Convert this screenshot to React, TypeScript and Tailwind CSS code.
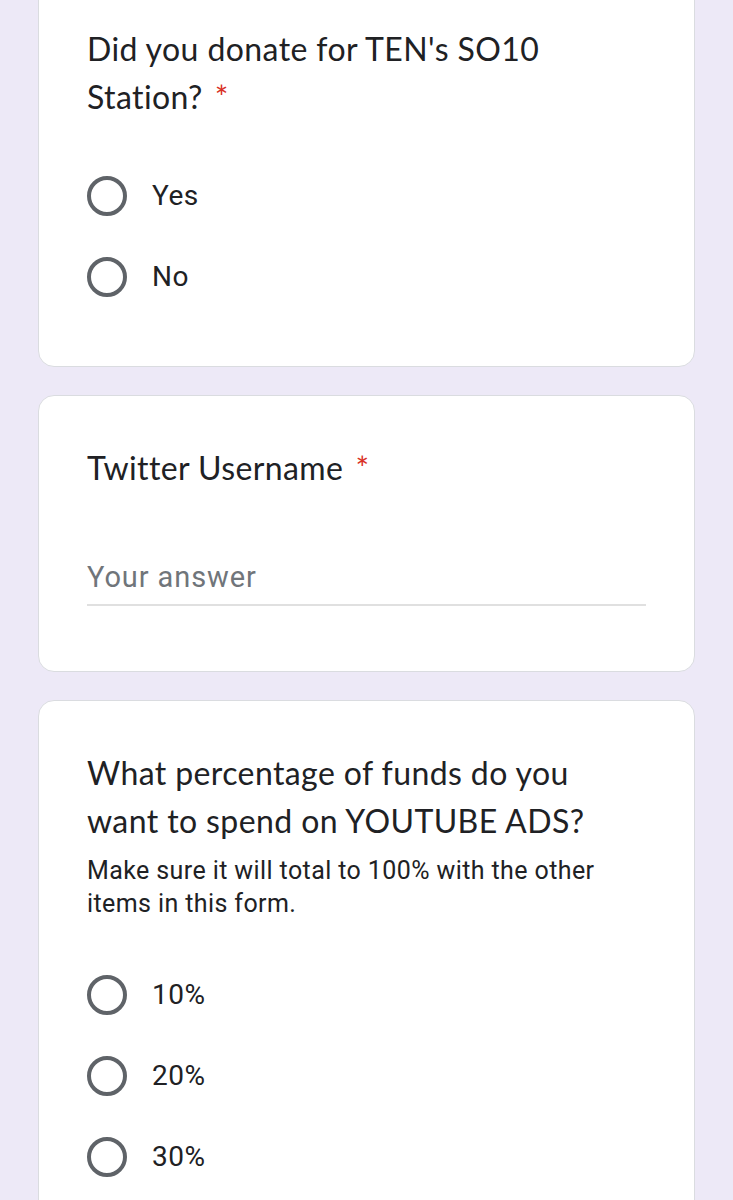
import React from "react";

const titleFont = { fontFamily: "Lato, 'Open Sans', sans-serif" };

function Radio({ label }: { label: string }) {
  return (
    <div className="flex items-center h-[81px]">
      <div className="w-10 h-10 rounded-full border-[4px] border-[#5f6368] shrink-0" />
      <span className="ml-[25px] text-[28px] tracking-[0.5px] text-[#202124] font-['Roboto',sans-serif]">
        {label}
      </span>
    </div>
  );
}

function Card({ children }: { children: React.ReactNode }) {
  return (
    <div className="bg-white rounded-[16px] border-[1.5px] border-[#dadce0] px-[48px] pt-[48px]">
      {children}
    </div>
  );
}

function Title({ children, required }: { children: React.ReactNode; required?: boolean }) {
  return (
    <div className="text-[32px] leading-[48px] tracking-[0.4px] text-[#202124]" style={titleFont}>
      {children}
      {required && <span className="text-[#d93025] ml-[12px]">*</span>}
    </div>
  );
}

export default function App() {
  return (
    <div className="min-h-screen bg-[#ede9f7] px-[38px] pb-10 overflow-hidden">
      <div className="-mt-[24px] flex flex-col gap-[28px]">
        <Card>
          <Title required>Did you donate for TEN's SO10 Station?</Title>
          <div className="mt-[34px] pb-[49px]">
            <Radio label="Yes" />
            <Radio label="No" />
          </div>
        </Card>

        <Card>
          <Title required>Twitter Username</Title>
          <div className="mt-[68px] pb-[10px] border-b-[2px] border-[#e0e0e0] text-[29px] leading-[34px] tracking-[0.9px] text-[#70757a] font-['Roboto',sans-serif]">
            Your answer
          </div>
          <div className="h-[65px]" />
        </Card>

        <Card>
          <Title>What percentage of funds do you want to spend on YOUTUBE ADS?</Title>
          <p className="mt-[9px] text-[25px] leading-[33px] tracking-[0.4px] text-[#202124] font-['Roboto',sans-serif]">
            Make sure it will total to 100% with the other items in this form.
          </p>
          <div className="mt-[34px] pb-[49px]">
            <Radio label="10%" />
            <Radio label="20%" />
            <Radio label="30%" />
          </div>
        </Card>
      </div>
    </div>
  );
}
